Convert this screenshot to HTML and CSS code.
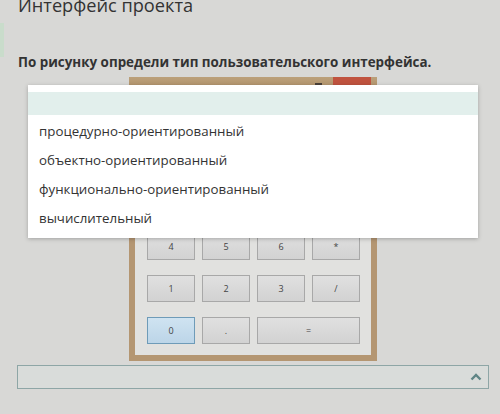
FILE: index.html
```html
<!DOCTYPE html>
<html lang="ru">
<head>
<meta charset="utf-8">
<link rel="stylesheet" href="styles.css">
</head>
<body>
<div class="tab"></div>
<div class="page">
  <h1 class="title">Интерфейс проекта</h1>
  <p class="question">По рисунку определи тип пользовательского интерфейса.</p>
  <div class="figure">
    <div class="calc">
      <div class="titlebar">
        <span class="min"></span>
        <span class="close"></span>
      </div>
      <div class="keys">
        <div class="key">7</div><div class="key">8</div><div class="key">9</div><div class="key">+</div>
        <div class="key">4</div><div class="key">5</div><div class="key">6</div><div class="key">*</div>
        <div class="key">1</div><div class="key">2</div><div class="key">3</div><div class="key">/</div>
        <div class="key active">0</div><div class="key">.</div><div class="key wide">=</div>
      </div>
    </div>
    <ul class="dropdown">
      <li class="blank"></li>
      <li>процедурно-ориентированный</li>
      <li>объектно-ориентированный</li>
      <li>функционально-ориентированный</li>
      <li>вычислительный</li>
    </ul>
  </div>
  <div class="select">
    <svg class="chev" width="12" height="8" viewBox="0 0 12 8"><path d="M1.5 6.5 L6 2 L10.5 6.5" fill="none" stroke="#5f8585" stroke-width="2.4"/></svg>
  </div>
</div>
</body>
</html>
```
FILE: styles.css
```css
html, body {
  margin: 0;
  padding: 0;
}
body {
  background: #d8d8d6;
  width: 500px;
  height: 414px;
  overflow: hidden;
  font-family: "Open Sans", "Noto Sans", sans-serif;
  color: #333;
  position: relative;
}
.tab {
  position: absolute;
  left: 0;
  top: 23px;
  width: 4px;
  height: 34px;
  background: #c9dccb;
}
.page {
  padding-left: 17px;
}
.title {
  margin: -7px 0 0 1px;
  font-size: 18.2px;
  line-height: 24px;
  font-weight: 400;
  color: #333;
}
.question {
  margin: 36px 0 0 1px;
  font-size: 13.4px;
  line-height: 18px;
  font-weight: 700;
  color: #333;
}
.figure {
  position: relative;
  margin-top: 6px;
  height: 288px;
}
.calc {
  position: absolute;
  left: 112px;
  top: 0;
  width: 236px;
  height: 278px;
  border: 6px solid #b49672;
  border-top: 0;
  background: #e1e1df;
  display: flex;
  flex-direction: column;
}
.titlebar {
  height: 14px;
  margin: 0 -6px;
  background: linear-gradient(#bba07a, #b09068);
  position: relative;
}
.min {
  position: absolute;
  left: 186px;
  top: 6px;
  width: 7px;
  height: 2px;
  background: #4a4038;
}
.close {
  position: absolute;
  right: 6px;
  top: 0;
  width: 38px;
  height: 14px;
  background: #c0533f;
}
.keys {
  margin-top: auto;
  padding: 0 11px 11px 12px;
  display: grid;
  grid-template-columns: repeat(4, 48px);
  grid-auto-rows: 27px;
  column-gap: 7px;
  row-gap: 15px;
}
.key {
  background: linear-gradient(#e0e0e0, #d2d2d2);
  border: 1px solid #a8a8a8;
  box-sizing: border-box;
  display: flex;
  align-items: center;
  justify-content: center;
  font-size: 9px;
  color: #444;
}
.key.active {
  background: linear-gradient(#cfe3f1, #bcd5e8);
  border-color: #6e9bb8;
}
.key.wide {
  grid-column: span 2;
}
.dropdown {
  position: absolute;
  left: 11px;
  top: 8px;
  width: 450px;
  margin: 0;
  padding: 7px 0 5px;
  list-style: none;
  background: #fff;
  box-shadow: 0 1px 4px rgba(0,0,0,0.25);
}
.dropdown li {
  height: 29px;
  line-height: 28px;
  padding-left: 11px;
  font-size: 13.3px;
  color: #333;
}
.dropdown li.blank {
  height: 23px;
  margin-bottom: 2px;
  background: #e2efec;
}
.select {
  width: 464px;
  height: 22px;
  border: 1px solid #8ea6a6;
  background: #d9dcda;
  display: flex;
  align-items: center;
  justify-content: flex-end;
  padding-right: 6px;
}
.chev {
  display: block;
}
```
